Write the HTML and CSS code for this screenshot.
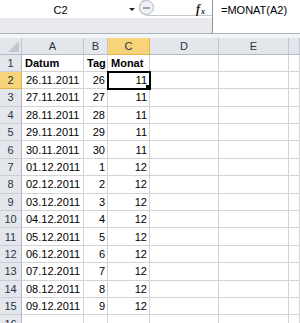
FILE: index.html
```html
<!doctype html>
<html>
<head>
    <meta charset="utf-8" />
    <title>MONAT</title>
    <link rel="stylesheet" href="styles.css">
</head>
<body>
<div class="app">
    <div class="formulabar">
        <div class="left">
            <div class="top">
                <div class="namebox"><span class="name">C2</span><span class="arrow"></span></div>
                <div class="pill"><span class="knob"><span class="dash"></span></span><span class="fx"><i>f</i><span class="x">x</span></span></div>
            </div>
            <div class="band"></div>
        </div>
        <div class="formula">=MONAT(A2)</div>
    </div>
    <div class="strip"></div>

    <div class="sheet">
        <div class="row head">
            <div class="c corner"><span class="tri"></span></div>
            <div class="c">A</div><div class="c">B</div><div class="c sel">C</div><div class="c">D</div><div class="c">E</div><div class="c"></div>
        </div>
        <div class="row"><div class="c rh">1</div><div class="c b">Datum</div><div class="c b">Tag</div><div class="c b">Monat</div><div class="c"></div><div class="c"></div><div class="c"></div></div>
        <div class="row"><div class="c rh sel">2</div><div class="c">26.11.2011</div><div class="c n">26</div><div class="c n active">11</div><div class="c"></div><div class="c"></div><div class="c"></div></div>
        <div class="row"><div class="c rh">3</div><div class="c">27.11.2011</div><div class="c n">27</div><div class="c n">11</div><div class="c"></div><div class="c"></div><div class="c"></div></div>
        <div class="row"><div class="c rh">4</div><div class="c">28.11.2011</div><div class="c n">28</div><div class="c n">11</div><div class="c"></div><div class="c"></div><div class="c"></div></div>
        <div class="row"><div class="c rh">5</div><div class="c">29.11.2011</div><div class="c n">29</div><div class="c n">11</div><div class="c"></div><div class="c"></div><div class="c"></div></div>
        <div class="row"><div class="c rh">6</div><div class="c">30.11.2011</div><div class="c n">30</div><div class="c n">11</div><div class="c"></div><div class="c"></div><div class="c"></div></div>
        <div class="row"><div class="c rh">7</div><div class="c">01.12.2011</div><div class="c n">1</div><div class="c n">12</div><div class="c"></div><div class="c"></div><div class="c"></div></div>
        <div class="row"><div class="c rh">8</div><div class="c">02.12.2011</div><div class="c n">2</div><div class="c n">12</div><div class="c"></div><div class="c"></div><div class="c"></div></div>
        <div class="row"><div class="c rh">9</div><div class="c">03.12.2011</div><div class="c n">3</div><div class="c n">12</div><div class="c"></div><div class="c"></div><div class="c"></div></div>
        <div class="row"><div class="c rh">10</div><div class="c">04.12.2011</div><div class="c n">4</div><div class="c n">12</div><div class="c"></div><div class="c"></div><div class="c"></div></div>
        <div class="row"><div class="c rh">11</div><div class="c">05.12.2011</div><div class="c n">5</div><div class="c n">12</div><div class="c"></div><div class="c"></div><div class="c"></div></div>
        <div class="row"><div class="c rh">12</div><div class="c">06.12.2011</div><div class="c n">6</div><div class="c n">12</div><div class="c"></div><div class="c"></div><div class="c"></div></div>
        <div class="row"><div class="c rh">13</div><div class="c">07.12.2011</div><div class="c n">7</div><div class="c n">12</div><div class="c"></div><div class="c"></div><div class="c"></div></div>
        <div class="row"><div class="c rh">14</div><div class="c">08.12.2011</div><div class="c n">8</div><div class="c n">12</div><div class="c"></div><div class="c"></div><div class="c"></div></div>
        <div class="row"><div class="c rh">15</div><div class="c">09.12.2011</div><div class="c n">9</div><div class="c n">12</div><div class="c"></div><div class="c"></div><div class="c"></div></div>
        <div class="row"><div class="c rh">16</div><div class="c"></div><div class="c"></div><div class="c"></div><div class="c"></div><div class="c"></div><div class="c"></div></div>
    </div>
</div>
</body>
</html>
```

FILE: styles.css
```css
* {
    margin: 0;
    padding: 0;
    box-sizing: border-box;
}

body {
    font-family: "Liberation Sans", Arial, sans-serif;
    font-size: 11px;
    color: #000;
    background: #fff;
    overflow: hidden;
}

.app {
    width: 300px;
    height: 323px;
    overflow: hidden;
}

/* formula bar */
.formulabar {
    display: flex;
    height: 34px;
    border-bottom: 1px solid #a9b2bd;
}

.left {
    width: 213px;
    border-right: 1px solid #8d96a1;
    display: flex;
    flex-direction: column;
}

.top {
    height: 18px;
    display: flex;
}

.namebox {
    width: 139px;
    background: #fff;
    display: flex;
    align-items: center;
}

.name {
    width: 121px;
    text-align: center;
    padding-top: 1px;
}

.arrow {
    width: 0;
    height: 0;
    border-left: 3px solid transparent;
    border-right: 3px solid transparent;
    border-top: 3px solid #222;
    margin-left: 8px;
}

.pill {
    flex: 1;
    height: 17px;
    margin-top: -1px;
    border: 1px solid #c2c8d1;
    border-right: none;
    border-radius: 9px 0 0 9px;
    background: #fff;
    display: flex;
    align-items: center;
}

.knob {
    width: 15px;
    height: 15px;
    border-radius: 50%;
    border: 1px solid #b3bac4;
    background: #eef0f3;
    display: flex;
    align-items: center;
    justify-content: center;
    margin-left: -1px;
}

.dash {
    width: 7px;
    height: 2px;
    background: #9aa2ad;
}

.fx {
    margin-left: 42px;
    font-family: "Liberation Serif", serif;
    font-weight: bold;
    font-size: 12px;
    line-height: 12px;
    color: #222;
    display: flex;
    align-items: flex-end;
    padding-top: 2px;
}

.fx .x {
    font-size: 8px;
    line-height: 8px;
    font-style: italic;
    margin-left: 1px;
    margin-bottom: -1px;
}

.band {
    flex: 1;
    background: #e8eaed;
}

.formula {
    flex: 1;
    padding: 4px 0 0 8px;
}

.strip {
    height: 4px;
    background: #f4f5f7;
}

/* sheet */
.row {
    display: grid;
    grid-template-columns: 22px 62px 24px 42px 69px 70px 11px;
    height: 17.4px;
}

.row.head {
    height: 16.5px;
}

.c {
    border-right: 1px solid #d4d4d4;
    border-bottom: 1px solid #d4d4d4;
    padding: 0 3px 0 4px;
    display: flex;
    align-items: center;
    white-space: nowrap;
    overflow: hidden;
}

.head .c {
    background: #e3e7ec;
    border-right: 1px solid #c0c6ce;
    border-bottom: 1px solid #b3bac4;
    justify-content: center;
    color: #2b3440;
    padding: 0;
}

.head .corner {
    position: relative;
}

.tri {
    position: absolute;
    right: 2px;
    bottom: 2px;
    width: 0;
    height: 0;
    border-left: 11px solid transparent;
    border-bottom: 11px solid #c3c8cf;
}

.rh {
    background: #e3e7ec;
    border-right: 1px solid #b3bac4;
    border-bottom: 1px solid #c8ced6;
    justify-content: center;
    color: #2b3440;
    padding: 0;
}

.head .sel,
.rh.sel {
    background: #f7d37a;
    border-color: #e2b44f;
}

.b {
    font-weight: bold;
    padding-left: 3px;
}

.n {
    justify-content: flex-end;
    padding-right: 2px;
}

.active {
    position: relative;
    outline: 2px solid #000;
    outline-offset: -1px;
    z-index: 1;
}

.active::after {
    content: "";
    position: absolute;
    right: -3px;
    bottom: -3px;
    width: 5px;
    height: 5px;
    background: #000;
    border: 1px solid #fff;
}
```
